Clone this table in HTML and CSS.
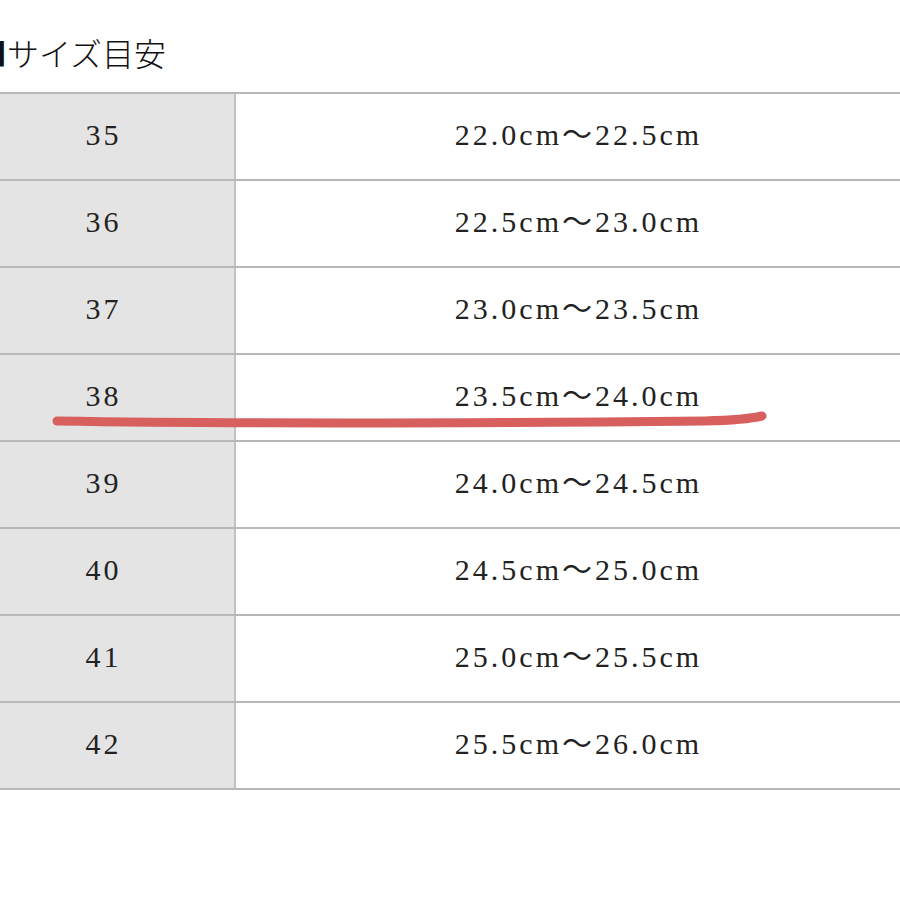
FILE: index.html
```html
<!DOCTYPE html>
<html lang="ja">
<head>
<meta charset="utf-8">
<link rel="stylesheet" href="styles.css">
</head>
<body>
<div class="page">
  <h1 class="title">■サイズ目安</h1>
  <div class="table">
    <div class="row"><div class="size">35</div><div class="range">22.0cm～22.5cm</div></div>
    <div class="row"><div class="size">36</div><div class="range">22.5cm～23.0cm</div></div>
    <div class="row"><div class="size">37</div><div class="range">23.0cm～23.5cm</div></div>
    <div class="row"><div class="size">38</div><div class="range">23.5cm～24.0cm</div></div>
    <div class="row"><div class="size">39</div><div class="range">24.0cm～24.5cm</div></div>
    <div class="row"><div class="size">40</div><div class="range">24.5cm～25.0cm</div></div>
    <div class="row"><div class="size">41</div><div class="range">25.0cm～25.5cm</div></div>
    <div class="row"><div class="size">42</div><div class="range">25.5cm～26.0cm</div></div>
  </div>
</div>
<svg class="marker" width="900" height="900" viewBox="0 0 900 900">
  <path d="M57 421 C 250 424, 500 423, 705 421 Q 745 420 762 416" fill="none" stroke="#d75f5d" stroke-width="9" stroke-linecap="round"/>
</svg>
</body>
</html>
```
FILE: styles.css
```css
html, body {
  margin: 0;
  padding: 0;
  background: #ffffff;
  overflow: hidden;
  width: 900px;
  height: 900px;
}
.page {
  margin-left: -27px;
  width: 948px;
  color: #222222;
}
.title {
  margin: 34px 0 0 0;
  padding-left: 2px;
  height: 58px;
  font-family: "Noto Sans CJK JP", sans-serif;
  font-weight: 300;
  font-size: 32px;
  line-height: 36px;
  color: #111111;
}
.table {
  border-top: 2px solid #b8b8b8;
}
.row {
  display: grid;
  grid-template-columns: 263px 1fr;
  height: 85px;
  border-bottom: 2px solid #b8b8b8;
}
.size, .range {
  display: flex;
  align-items: center;
  justify-content: center;
  font-family: "Liberation Serif", "Noto Sans CJK JP", serif;
  font-size: 30px;
  line-height: 30px;
  letter-spacing: 3px;
  padding-bottom: 4px;
  box-sizing: border-box;
}
.size {
  background: #e4e4e4;
  border-right: 2px solid #c2c2c2;
}
.range {
  background: #ffffff;
}
.marker {
  position: absolute;
  left: 0;
  top: 0;
  pointer-events: none;
}
```
